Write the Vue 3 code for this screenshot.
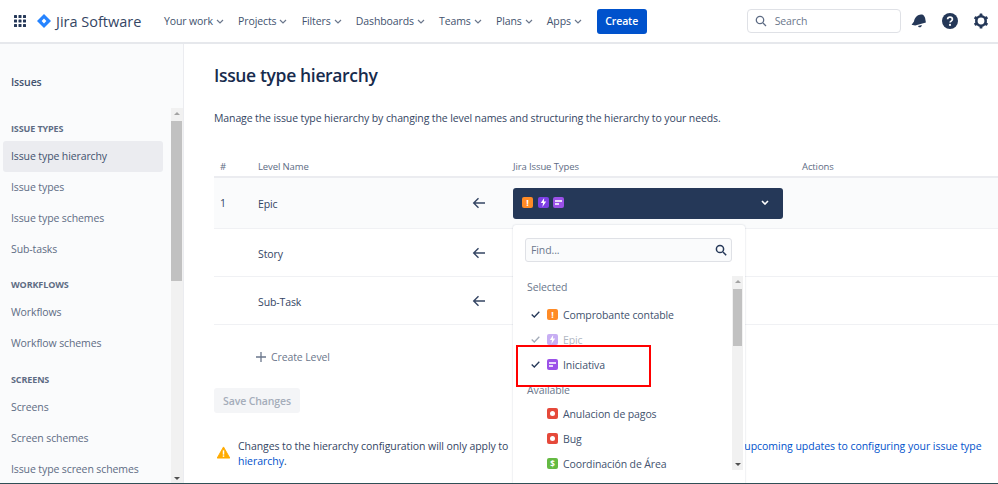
<script setup>
const nav = ['Your work', 'Projects', 'Filters', 'Dashboards', 'Teams', 'Plans', 'Apps']
const sections = [
  { title: 'ISSUE TYPES', items: ['Issue type hierarchy', 'Issue types', 'Issue type schemes', 'Sub-tasks'] },
  { title: 'WORKFLOWS', items: ['Workflows', 'Workflow schemes'] },
  { title: 'SCREENS', items: ['Screens', 'Screen schemes', 'Issue type screen schemes'] }
]
const rows = [
  { n: '1', name: 'Epic' },
  { n: '', name: 'Story' },
  { n: '', name: 'Sub-Task' }
]
const selected = [
  { label: 'Comprobante contable', kind: 'orange' },
  { label: 'Epic', kind: 'bolt', muted: true },
  { label: 'Iniciativa', kind: 'lines' }
]
const available = [
  { label: 'Anulacion de pagos', kind: 'red' },
  { label: 'Bug', kind: 'red' },
  { label: 'Coordinación de Área', kind: 'green' }
]
</script>

<template>
  <div class="app">
    <header class="top">
      <svg class="grid-ic" width="14" height="14" viewBox="0 0 14 14" fill="#253858">
        <rect x="1" y="1" width="3" height="3" rx=".5" /><rect x="5.5" y="1" width="3" height="3" rx=".5" /><rect x="10" y="1" width="3" height="3" rx=".5" />
        <rect x="1" y="5.5" width="3" height="3" rx=".5" /><rect x="5.5" y="5.5" width="3" height="3" rx=".5" /><rect x="10" y="5.5" width="3" height="3" rx=".5" />
        <rect x="1" y="10" width="3" height="3" rx=".5" /><rect x="5.5" y="10" width="3" height="3" rx=".5" /><rect x="10" y="10" width="3" height="3" rx=".5" />
      </svg>
      <svg class="logo-ic" width="14" height="14" viewBox="0 0 14 14">
        <path d="M7 0 14 7 7 14 0 7Z" fill="#2684FF" />
        <path d="M7 4.6 9.4 7 7 9.4 4.6 7Z" fill="#fff" />
      </svg>
      <span class="brand">Jira Software</span>
      <nav class="nav">
        <span v-for="n in nav" :key="n" class="nav-item">
          {{ n }}
          <svg width="8" height="5" viewBox="0 0 8 5" fill="none" stroke="#6B778C" stroke-width="1.2"><path d="M1 1l3 3 3-3" /></svg>
        </span>
      </nav>
      <button class="create">Create</button>
      <div class="search">
        <svg width="12" height="12" viewBox="0 0 12 12" fill="none" stroke="#5E6C84" stroke-width="1.3"><circle cx="5" cy="5" r="3.7" /><path d="M8 8l3 3" /></svg>
        <span>Search</span>
      </div>
      <svg class="act bell" width="16" height="16" viewBox="0 0 16 16" fill="#253858">
        <path d="M11.200 1.600c1.600.6 2.500 2 2.900 3.500l.8 4.300-10.700 3-3.600-.7 2.400-3.100c.3-2 1-3.800 2.700-5.300 1.700-1.500 3.600-2.300 5.500-1.700Z" />
        <path d="M7 12.900l3.800-1c-.1 1.400-1 2.300-2.100 2.400-.8 0-1.400-.5-1.700-1.400Z" />
      </svg>
      <svg class="act help" width="16" height="16" viewBox="0 0 16 16">
        <circle cx="8" cy="8" r="8" fill="#253858" />
        <path d="M5.600 6.300C5.700 5 6.700 4.200 8 4.200c1.400 0 2.400.9 2.400 2.100 0 1.700-2.300 1.800-2.300 3.300" fill="none" stroke="#fff" stroke-width="1.700" />
        <circle cx="8" cy="11.900" r="1.100" fill="#fff" />
      </svg>
      <svg class="act gear" width="16" height="16" viewBox="0 0 16 16">
        <circle cx="8" cy="8" r="4.700" fill="none" stroke="#253858" stroke-width="2.600" />
        <g fill="#253858"><rect x="6.600" y="0.600" width="2.800" height="3" rx=".5" /><rect x="6.600" y="12.400" width="2.800" height="3" rx=".5" />
          <rect x="6.600" y="0.600" width="2.800" height="3" rx=".5" transform="rotate(60 8 8)" /><rect x="6.600" y="0.600" width="2.800" height="3" rx=".5" transform="rotate(120 8 8)" />
          <rect x="6.600" y="0.600" width="2.800" height="3" rx=".5" transform="rotate(240 8 8)" /><rect x="6.600" y="0.600" width="2.800" height="3" rx=".5" transform="rotate(300 8 8)" /></g>
      </svg>
    </header>

    <div class="body">
      <aside class="side">
        <div class="side-title">Issues</div>
        <div class="side-scroll">
          <div class="side-list">
            <section v-for="s in sections" :key="s.title" class="side-sec">
              <h4>{{ s.title }}</h4>
              <a v-for="i in s.items" :key="i" :class="['side-link', { active: i === 'Issue type hierarchy' }]">{{ i }}</a>
            </section>
          </div>
          <div class="bar side-bar">
            <i class="up"></i>
            <b class="thumb"></b>
            <i class="down"></i>
          </div>
        </div>
      </aside>

      <main class="main">
        <h1>Issue type hierarchy</h1>
        <p class="desc">Manage the issue type hierarchy by changing the level names and structuring the hierarchy to your needs.</p>

        <div class="thead">
          <span class="c-n">#</span><span class="c-name">Level Name</span><span class="c-arrow"></span><span class="c-types">Jira Issue Types</span><span>Actions</span>
        </div>
        <div v-for="(r, idx) in rows" :key="r.name" :class="['row', { first: idx === 0 }]">
          <span class="c-n">{{ r.n }}</span>
          <span class="c-name">{{ r.name }}</span>
          <span class="c-arrow">
            <svg width="14" height="12" viewBox="0 0 14 12" fill="none" stroke="#344563" stroke-width="1.4"><path d="M13 6H2M6.500 1.200 1.700 6l4.800 4.800" /></svg>
          </span>
          <span class="c-types">
            <span v-if="idx === 0" class="picker">
              <span class="ti orange sm">!</span>
              <span class="ti bolt sm"><svg width="7" height="9" viewBox="0 0 6 8" fill="#fff"><path d="M3.600 0 .6 4.500h2L2 8l3.400-4.800h-2Z" /></svg></span>
              <span class="ti lines sm"><u></u><u></u></span>
              <svg class="pick-chev" width="8" height="5" viewBox="0 0 8 5" fill="none" stroke="#fff" stroke-width="1.600"><path d="M1 1l3 3 3-3" /></svg>
            </span>
          </span>
        </div>

        <div class="create-level">
          <svg width="10" height="10" viewBox="0 0 10 10" stroke="#6B778C" stroke-width="1.300"><path d="M5 0v10M0 5h10" /></svg>
          Create Level
        </div>
        <button class="save">Save Changes</button>

        <div class="warn">
          <svg width="13" height="13" viewBox="0 0 14 13"><path d="M7 .5 13.800 12.500H.2Z" fill="#FFAB00" stroke="#FFAB00" stroke-linejoin="round" /><rect x="6.200" y="4.200" width="1.600" height="4.600" fill="#fff" /><rect x="6.200" y="9.600" width="1.600" height="1.600" fill="#fff" /></svg>
          <p>Changes to the hierarchy configuration will only apply to<span class="hidden-run"></span><a>upcoming updates to configuring your issue type hierarchy</a>.</p>
        </div>
      </main>
    </div>

    <div class="drop">
      <div class="find"><span>Find...</span>
        <svg width="12" height="12" viewBox="0 0 12 12" fill="none" stroke="#253858" stroke-width="1.500"><circle cx="5" cy="5" r="3.600" /><path d="M8 8l3.200 3.200" /></svg>
      </div>
      <div class="drop-body">
        <div class="drop-list">
          <div class="drop-head">Selected</div>
          <div v-for="o in selected" :key="o.label" :class="['opt', { muted: o.muted }]">
            <svg class="check" width="9" height="7" viewBox="0 0 9 7" fill="none" stroke="#253858" stroke-width="1.300"><path d="M.7 3.500 3.300 6 8.300.8" /></svg>
            <span v-if="o.kind === 'orange'" class="ti orange">!</span>
            <span v-else-if="o.kind === 'bolt'" class="ti bolt"><svg width="7" height="9" viewBox="0 0 6 8" fill="#fff"><path d="M3.600 0 .6 4.500h2L2 8l3.400-4.800h-2Z" /></svg></span>
            <span v-else class="ti lines"><u></u><u></u></span>
            {{ o.label }}
          </div>
          <div class="drop-head avail">Available</div>
          <div v-for="o in available" :key="o.label" class="opt">
            <span class="check-gap"></span>
            <span v-if="o.kind === 'red'" class="ti red"><em></em></span>
            <span v-else class="ti green">$</span>
            {{ o.label }}
          </div>
        </div>
        <div class="bar drop-bar">
          <i class="up"></i>
          <b class="thumb"></b>
          <i class="down"></i>
        </div>
      </div>
    </div>
    <div class="mark"></div>
    <div class="edge"></div>
  </div>
</template>

<style>
html, body { margin: 0; background: #fff; }
</style>

<style scoped>
.app { position: relative; width: 998px; height: 484px; overflow: hidden; display: flex; flex-direction: column; font-family: "Open Sans", "Noto Sans", sans-serif; font-size: 10.5px; letter-spacing: -.11px; color: #42526E; background: #fff; }
.top { height: 42px; flex: none; display: flex; align-items: center; padding: 0 10px 0 13px; border-bottom: 2px solid #E6E8EC; }
.top > * { flex: none; }
.logo-ic { margin-left: 10px; }
.brand { margin-left: 5px; width: 100px; font-size: 14.5px; letter-spacing: 0; color: #344563; white-space: nowrap; }
.nav { margin-left: 8px; display: flex; gap: 14.2px; }
.nav-item { display: inline-flex; align-items: center; gap: 3px; white-space: nowrap; color: #42526E; font-weight: 500; }
.create { margin-left: 14.8px; width: 50px; height: 25px; border: 0; border-radius: 3px; background: #0052CC; color: #fff; font: 600 10.5px "Open Sans", sans-serif; letter-spacing: -.11px; padding: 0; }
.search { margin-left: 100px; width: 154px; height: 24px; box-sizing: border-box; border: 1px solid #DFE1E6; border-radius: 4px; display: flex; align-items: center; gap: 8px; padding-left: 7px; color: #6B778C; }
.bell { margin-left: 10px; }
.help { margin-left: 15px; }
.gear { margin-left: 15px; }

.body { flex: 1; display: flex; min-height: 0; }
.side { width: 184px; box-sizing: border-box; flex: none; background: #FAFBFC; border-right: 1px solid #EBECF0; display: flex; flex-direction: column; }
.side-title { height: 64px; padding: 31px 0 0 11px; box-sizing: border-box; font-weight: 600; color: #42526E; line-height: 14px; }
.side-scroll { flex: 1; min-height: 0; display: flex; }
.side-list { flex: 1; overflow: hidden; padding: 14px 8px 0 3px; }
.side-sec { margin-bottom: 13.3px; }
.side-sec h4 { margin: 0 0 5px; padding-left: 8px; font-size: 9px; line-height: 14px; font-weight: 700; color: #5E6C84; }
.side-link { display: block; height: 31px; line-height: 31px; padding-left: 8px; border-radius: 3px; color: #5E6C84; white-space: nowrap; }
.side-link.active { background: #EBECF0; color: #42526E; }

.bar { flex: none; background: #F1F1F1; display: flex; flex-direction: column; align-items: stretch; }
.bar .thumb { display: block; background: #C1C1C1; flex: none; }
.bar i { display: block; flex: none; width: 0; height: 0; border-left: 3px solid transparent; border-right: 3px solid transparent; align-self: center; }
.bar .up { border-bottom: 3px solid #A3A3A3; margin-top: 4px; margin-bottom: 6px; }
.bar .down { border-top: 3px solid #505050; margin-top: auto; margin-bottom: 4px; }
.side-bar { width: 12px; }
.side-bar .thumb { height: 160px; margin: 0 1px 0 0; }

.main { flex: 1; min-width: 0; padding: 0 0 0 30px; }
h1 { margin: 0; padding-top: 18px; font-size: 17.5px; line-height: 26px; font-weight: 600; letter-spacing: -.35px; color: #172B4D; }
.desc { margin: 0; padding-top: 22px; line-height: 16px; color: #344563; }
.thead { margin-top: 31px; height: 21px; box-sizing: border-box; display: flex; align-items: center; font-size: 9.5px; font-weight: 500; color: #5E6C84; border-bottom: 2px solid #EBECF0; line-height: 12px; }
.row { height: 48px; box-sizing: border-box; display: flex; align-items: center; border-bottom: 1px solid #F0F1F4; color: #344563; }
.row.first { height: 51px; background: #FAFBFC; }
.c-n { width: 44px; padding-left: 6px; box-sizing: border-box; flex: none; }
.c-name { width: 214px; flex: none; }
.row .c-name { padding-top: 2px; }
.c-arrow { width: 41px; flex: none; display: flex; }
.c-types { width: 289px; flex: none; }
.picker { width: 270px; height: 31px; box-sizing: border-box; background: #253858; border-radius: 3px; display: flex; align-items: center; gap: 4.5px; padding: 0 14px 2px 9px; }
.pick-chev { margin-left: auto; }

.ti { width: 11px; height: 11px; border-radius: 2px; flex: none; display: inline-flex; align-items: center; justify-content: center; color: #fff; font-size: 9px; font-weight: 700; line-height: 1; font-style: normal; flex-direction: column; gap: 1px; }
.ti.orange { background: #FF8B26; }
.ti.bolt { background: #7C3FE4; }
.ti.lines { background: #9B51E8; align-items: flex-start; padding-left: 2px; box-sizing: border-box; }
.ti.lines u { display: block; height: 2px; width: 7px; background: #E8D8FB; }
.ti.lines u + u { width: 4px; }
.ti.red { background: #E5493A; }
.ti.red em { width: 5px; height: 5px; border-radius: 50%; background: #fff; }
.ti.green { background: #65BA43; font-size: 8px; }

.create-level { margin-top: 24px; padding-left: 42px; display: flex; align-items: center; gap: 5px; line-height: 16px; color: #6B778C; font-weight: 500; }
.save { display: block; margin-top: 23px; width: 86px; height: 25px; padding: 0; border: 0; border-radius: 3px; background: #F4F5F7; color: #A5ADBA; font: 600 10.5px "Open Sans", sans-serif; letter-spacing: -.11px; }
.warn { margin-top: 26px; display: flex; align-items: flex-start; gap: 8px; padding-left: 3px; }
.warn svg { margin-top: 7px; flex: none; }
.warn p { margin: 0; width: 746px; line-height: 15px; color: #344563; letter-spacing: -.08px; }
.warn a { color: #0052CC; letter-spacing: -.03px; }
.hidden-run { display: inline-block; width: 236px; }

.drop { position: absolute; left: 513px; top: 225px; width: 232px; height: 259px; box-sizing: border-box; background: #fff; border-radius: 3px 3px 0 0; box-shadow: 0 0 2px rgba(9,30,66,.2); z-index: 2; }
.find { position: absolute; left: 12px; top: 13px; width: 207px; height: 24px; box-sizing: border-box; border: 1px solid #DFE1E6; border-radius: 3px; background: #FAFBFC; display: flex; align-items: center; justify-content: space-between; padding: 0 4px 0 5px; color: #6B778C; }
.drop-body { position: absolute; left: 0; right: 2px; top: 51px; height: 194px; display: flex; }
.drop-list { flex: 1; min-width: 0; overflow: hidden; }
.drop-head { height: 22px; line-height: 22px; padding-left: 14px; color: #6B778C; margin-bottom: 4px; }
.drop-head.avail { margin: 2px 0 0; height: 22px; }
.opt { height: 25px; display: flex; align-items: center; padding-left: 18px; gap: 5px; color: #42526E; white-space: nowrap; }
.opt.muted { opacity: .42; }
.check { flex: none; width: 9px; margin-right: 2px; }
.check-gap { width: 9px; flex: none; margin-right: 2px; }
.drop-bar { width: 11px; }
.drop-bar .thumb { height: 57px; margin: 0 1px; }
.mark { position: absolute; left: 516px; top: 345px; width: 135px; height: 42px; box-sizing: border-box; border: 2px solid #F00; z-index: 3; }
.edge { position: absolute; left: 0; right: 0; bottom: 0; height: 1px; background: #2F4F56; z-index: 4; }
</style>
